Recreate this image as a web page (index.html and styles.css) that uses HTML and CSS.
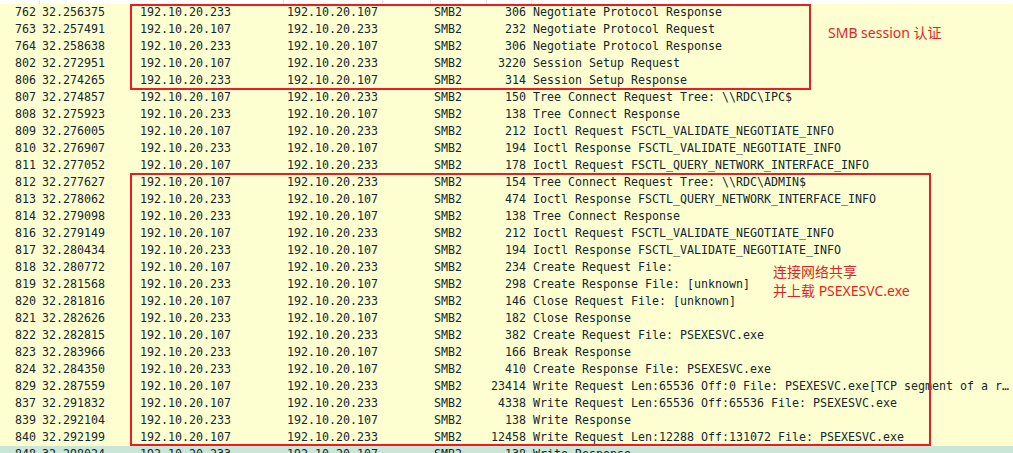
FILE: index.html
```html
<!DOCTYPE html>
<html>
<head>
<meta charset="utf-8">
<link rel="stylesheet" href="styles.css">
</head>
<body>
<div class="pane">
  <div class="hdr"><span class="h1"></span><span class="h2"></span><span class="h3"></span><span class="h4"></span><span class="h5"></span><span class="h6"></span></div>
  <div class="list">
    <div class="row"><span class="no">762</span><span class="t">32.256375</span><span>192.10.20.233</span><span>192.10.20.107</span><span>SMB2</span><span class="len">306</span><span class="info">Negotiate Protocol Response</span></div>
    <div class="row"><span class="no">763</span><span class="t">32.257491</span><span>192.10.20.107</span><span>192.10.20.233</span><span>SMB2</span><span class="len">232</span><span class="info">Negotiate Protocol Request</span></div>
    <div class="row"><span class="no">764</span><span class="t">32.258638</span><span>192.10.20.233</span><span>192.10.20.107</span><span>SMB2</span><span class="len">306</span><span class="info">Negotiate Protocol Response</span></div>
    <div class="row"><span class="no">802</span><span class="t">32.272951</span><span>192.10.20.107</span><span>192.10.20.233</span><span>SMB2</span><span class="len">3220</span><span class="info">Session Setup Request</span></div>
    <div class="row"><span class="no">806</span><span class="t">32.274265</span><span>192.10.20.233</span><span>192.10.20.107</span><span>SMB2</span><span class="len">314</span><span class="info">Session Setup Response</span></div>
    <div class="row"><span class="no">807</span><span class="t">32.274857</span><span>192.10.20.107</span><span>192.10.20.233</span><span>SMB2</span><span class="len">150</span><span class="info">Tree Connect Request Tree: \\RDC\IPC$</span></div>
    <div class="row"><span class="no">808</span><span class="t">32.275923</span><span>192.10.20.233</span><span>192.10.20.107</span><span>SMB2</span><span class="len">138</span><span class="info">Tree Connect Response</span></div>
    <div class="row"><span class="no">809</span><span class="t">32.276005</span><span>192.10.20.107</span><span>192.10.20.233</span><span>SMB2</span><span class="len">212</span><span class="info">Ioctl Request FSCTL_VALIDATE_NEGOTIATE_INFO</span></div>
    <div class="row"><span class="no">810</span><span class="t">32.276907</span><span>192.10.20.233</span><span>192.10.20.107</span><span>SMB2</span><span class="len">194</span><span class="info">Ioctl Response FSCTL_VALIDATE_NEGOTIATE_INFO</span></div>
    <div class="row"><span class="no">811</span><span class="t">32.277052</span><span>192.10.20.107</span><span>192.10.20.233</span><span>SMB2</span><span class="len">178</span><span class="info">Ioctl Request FSCTL_QUERY_NETWORK_INTERFACE_INFO</span></div>
    <div class="row"><span class="no">812</span><span class="t">32.277627</span><span>192.10.20.107</span><span>192.10.20.233</span><span>SMB2</span><span class="len">154</span><span class="info">Tree Connect Request Tree: \\RDC\ADMIN$</span></div>
    <div class="row"><span class="no">813</span><span class="t">32.278062</span><span>192.10.20.233</span><span>192.10.20.107</span><span>SMB2</span><span class="len">474</span><span class="info">Ioctl Response FSCTL_QUERY_NETWORK_INTERFACE_INFO</span></div>
    <div class="row"><span class="no">814</span><span class="t">32.279098</span><span>192.10.20.233</span><span>192.10.20.107</span><span>SMB2</span><span class="len">138</span><span class="info">Tree Connect Response</span></div>
    <div class="row"><span class="no">816</span><span class="t">32.279149</span><span>192.10.20.107</span><span>192.10.20.233</span><span>SMB2</span><span class="len">212</span><span class="info">Ioctl Request FSCTL_VALIDATE_NEGOTIATE_INFO</span></div>
    <div class="row"><span class="no">817</span><span class="t">32.280434</span><span>192.10.20.233</span><span>192.10.20.107</span><span>SMB2</span><span class="len">194</span><span class="info">Ioctl Response FSCTL_VALIDATE_NEGOTIATE_INFO</span></div>
    <div class="row"><span class="no">818</span><span class="t">32.280772</span><span>192.10.20.107</span><span>192.10.20.233</span><span>SMB2</span><span class="len">234</span><span class="info">Create Request File:</span></div>
    <div class="row"><span class="no">819</span><span class="t">32.281568</span><span>192.10.20.233</span><span>192.10.20.107</span><span>SMB2</span><span class="len">298</span><span class="info">Create Response File: [unknown]</span></div>
    <div class="row"><span class="no">820</span><span class="t">32.281816</span><span>192.10.20.107</span><span>192.10.20.233</span><span>SMB2</span><span class="len">146</span><span class="info">Close Request File: [unknown]</span></div>
    <div class="row"><span class="no">821</span><span class="t">32.282626</span><span>192.10.20.233</span><span>192.10.20.107</span><span>SMB2</span><span class="len">182</span><span class="info">Close Response</span></div>
    <div class="row"><span class="no">822</span><span class="t">32.282815</span><span>192.10.20.107</span><span>192.10.20.233</span><span>SMB2</span><span class="len">382</span><span class="info">Create Request File: PSEXESVC.exe</span></div>
    <div class="row"><span class="no">823</span><span class="t">32.283966</span><span>192.10.20.233</span><span>192.10.20.107</span><span>SMB2</span><span class="len">166</span><span class="info">Break Response</span></div>
    <div class="row"><span class="no">824</span><span class="t">32.284350</span><span>192.10.20.233</span><span>192.10.20.107</span><span>SMB2</span><span class="len">410</span><span class="info">Create Response File: PSEXESVC.exe</span></div>
    <div class="row"><span class="no">829</span><span class="t">32.287559</span><span>192.10.20.107</span><span>192.10.20.233</span><span>SMB2</span><span class="len">23414</span><span class="info">Write Request Len:65536 Off:0 File: PSEXESVC.exe[TCP segment of a reassembled PDU]</span></div>
    <div class="row"><span class="no">837</span><span class="t">32.291832</span><span>192.10.20.107</span><span>192.10.20.233</span><span>SMB2</span><span class="len">4338</span><span class="info">Write Request Len:65536 Off:65536 File: PSEXESVC.exe</span></div>
    <div class="row"><span class="no">839</span><span class="t">32.292104</span><span>192.10.20.233</span><span>192.10.20.107</span><span>SMB2</span><span class="len">138</span><span class="info">Write Response</span></div>
    <div class="row"><span class="no">840</span><span class="t">32.292199</span><span>192.10.20.107</span><span>192.10.20.233</span><span>SMB2</span><span class="len">12458</span><span class="info">Write Request Len:12288 Off:131072 File: PSEXESVC.exe</span></div>
    <div class="row tcp"><span class="no">848</span><span class="t">32.298024</span><span>192.10.20.233</span><span>192.10.20.107</span><span>SMB2</span><span class="len">138</span><span class="info">Write Response</span></div>
  </div>
  <div class="box box-a"></div>
  <div class="box box-b"></div>
  <div class="note note-a">SMB session 认证</div>
  <div class="note note-b">连接网络共享<br>并上载 PSEXESVC.exe</div>
</div>
</body>
</html>
```
FILE: styles.css
```css
html, body {
  margin: 0;
  padding: 0;
  background: #ffffff;
}
.pane {
  position: relative;
  width: 1013px;
  height: 453px;
  overflow: hidden;
  font-family: "DejaVu Sans Mono", "Liberation Mono", monospace;
  font-size: 11.63px;
  color: #12272e;
}
.hdr {
  display: flex;
  height: 4px;
  background: #ffffff;
}
.hdr span {
  border-right: 1px solid #e3e3e3;
  box-sizing: border-box;
}
.h1 { width: 40px; }
.h2 { width: 244px; }
.h3 { width: 99px; }
.h4 { width: 48px; }
.h5 { width: 56px; }
.h6 { width: 45px; }
.list {
  display: flex;
  flex-direction: column;
}
.row {
  display: grid;
  grid-template-columns: 36px 104px 147px 147px 56px 36px 1fr;
  height: 17px;
  line-height: 17px;
  background: #feffd0;
  white-space: nowrap;
}
.row.tcp {
  background: #c9e6d6;
}
.row span {
  overflow: hidden;
}
.no { text-align: right; }
.t { padding-left: 6px; }
.len { text-align: right; overflow: visible !important; }
.info {
  padding-left: 7px;
  text-overflow: ellipsis;
  overflow: hidden;
}
.box {
  position: absolute;
  border: 2px solid #ec1c24;
  box-sizing: border-box;
}
.box-a {
  left: 130px;
  top: 4px;
  width: 681px;
  height: 86px;
}
.box-b {
  left: 130px;
  top: 173px;
  width: 801px;
  height: 273px;
}
.note {
  position: absolute;
  font-family: "Noto Sans", "Noto Sans CJK SC", sans-serif;
  font-size: 14px;
  line-height: 19px;
  color: #ec1c24;
}
.note-a {
  left: 828px;
  top: 23px;
}
.note-b {
  left: 773px;
  top: 262px;
}
```
